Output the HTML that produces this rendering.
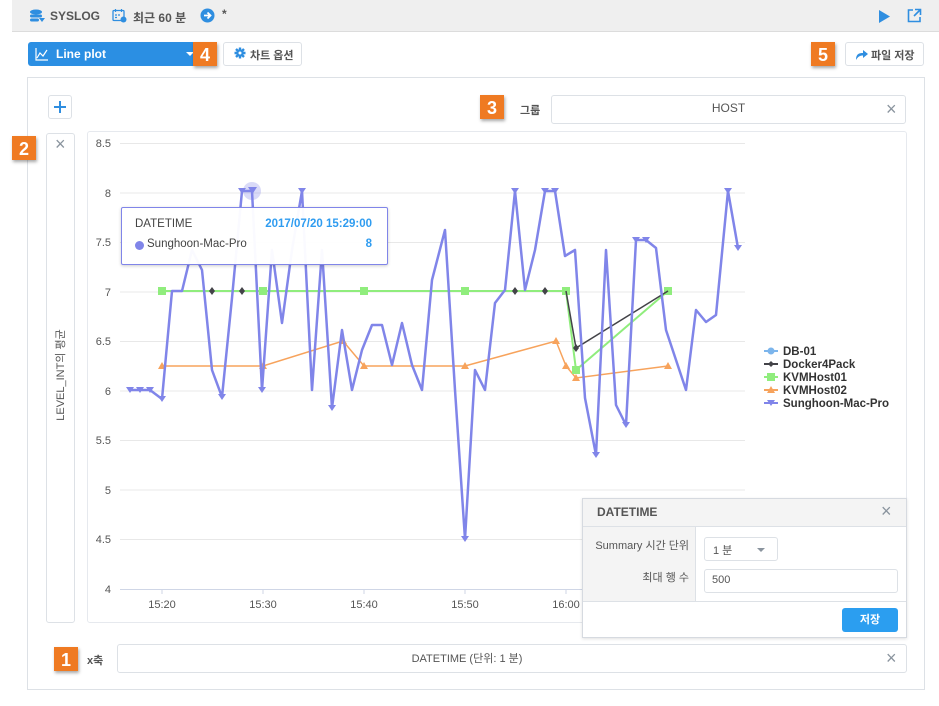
<!DOCTYPE html>
<html><head><meta charset="utf-8"><style>
*{box-sizing:border-box;margin:0;padding:0}
body{width:939px;height:706px;background:#fff;position:relative;overflow:hidden;font-family:"Liberation Sans","Noto Sans CJK KR",sans-serif;color:#444;font-size:12px}
.a{position:absolute}
.badge{position:absolute;width:24px;height:24px;background:#ef7a22;color:#fff;font-size:18px;font-weight:bold;text-align:center;line-height:26px;box-shadow:1px 2px 3px rgba(0,0,0,.35)}
.box{position:absolute;border:1px solid #dde1e6;border-radius:3px;background:#fff}
</style></head><body>
<div class="a" style="left:12px;top:0;width:927px;height:32px;background:#efefef;border-bottom:1px solid #dcdcdc"></div>
<svg class="a" style="left:29px;top:9px" width="16" height="14" viewBox="0 0 16 14"><ellipse cx="7" cy="3" rx="6" ry="2.5" fill="#2f8ee0"/><rect x="1" y="5.5" width="12" height="3" rx="1.5" fill="#2f8ee0"/><rect x="1" y="9.5" width="9" height="3" rx="1.5" fill="#2f8ee0"/><path d="M10 9h6l-3 4z" fill="#2f8ee0"/></svg>
<div class="a" style="left:50px;top:9px;font-size:12px;font-weight:bold;color:#555">SYSLOG</div>
<svg class="a" style="left:112px;top:8px" width="15" height="15" viewBox="0 0 15 15"><rect x="1" y="2.5" width="11" height="10" rx="1" fill="none" stroke="#2f8ee0" stroke-width="1.3"/><path d="M3.5 1v3M9.5 1v3M3 7h2M6 7h2M3 9.5h2" stroke="#2f8ee0" stroke-width="1.2"/><circle cx="11.5" cy="11.5" r="3" fill="#2f8ee0"/></svg>
<div class="a" style="left:133px;top:9px;font-weight:bold;color:#555">최근 60 분</div>
<svg class="a" style="left:200px;top:8px" width="15" height="15"><circle cx="7.5" cy="7.5" r="7" fill="#2f8ee0"/><path d="M4 7.5h6M7.5 4.5l3 3-3 3" stroke="#fff" stroke-width="1.8" fill="none"/></svg>
<div class="a" style="left:222px;top:7px;font-weight:bold;color:#555">*</div>
<svg class="a" style="left:878px;top:10px" width="12" height="13"><path d="M1 0l11 6.5L1 13z" fill="#2f8ee0"/></svg>
<svg class="a" style="left:907px;top:8px" width="15" height="15" fill="none" stroke="#2f8ee0" stroke-width="1.6"><path d="M6 2H1.5v11.5H13V9"/><path d="M8 1.5h5.5V7M13.5 1.5L7 8"/></svg>

<div class="a" style="left:28px;top:42px;width:172px;height:24px;background:#2b8fe3;border-radius:3px"></div>
<svg class="a" style="left:35px;top:47px" width="14" height="14" fill="none" stroke="#fff" stroke-width="1.2"><path d="M1 1v12h12M2 11l3-5 3 3 4-6"/></svg>
<div class="a" style="left:56px;top:47px;color:#fff;font-weight:bold;font-size:12px">Line plot</div>
<div class="a" style="left:186px;top:52px;border:4px solid transparent;border-top-color:#fff;border-bottom:0"></div>
<div class="badge" style="left:193px;top:42px">4</div>
<div class="box" style="left:223px;top:42px;width:79px;height:24px"></div>
<svg class="a" style="left:234px;top:47px" width="12" height="12" viewBox="0 0 12 12"><g stroke="#2f8ee0" stroke-width="2.4"><path d="M6 0.5v11M0.5 6h11M2 2l8 8M10 2l-8 8"/></g><circle cx="6" cy="6" r="3.8" fill="#2f8ee0"/><circle cx="6" cy="6" r="1.5" fill="#fff"/></svg>
<div class="a" style="left:250px;top:47px;font-weight:bold;font-size:11px;color:#555">차트 옵션</div>
<div class="badge" style="left:811px;top:42px">5</div>
<div class="box" style="left:845px;top:42px;width:79px;height:24px"></div>
<svg class="a" style="left:855px;top:49px" width="13" height="11"><path d="M1 11C1 5 4 4 8 4V1l5 4-5 4V6.5C5 6.5 3 7.5 1 11z" fill="#2f8ee0"/></svg>
<div class="a" style="left:871px;top:47px;font-weight:bold;font-size:11px;color:#555">파일 저장</div>

<div class="a" style="left:27px;top:77px;width:898px;height:613px;border:1px solid #dde1e6"></div>
<div class="box" style="left:48px;top:95px;width:24px;height:24px"></div>
<svg class="a" style="left:54px;top:101px" width="12" height="12" stroke="#2f8ee0" stroke-width="2"><path d="M6 0v12M0 6h12"/></svg>
<div class="badge" style="left:480px;top:95px">3</div>
<div class="a" style="left:520px;top:102px;font-weight:bold;font-size:11px;color:#555">그룹</div>
<div class="box" style="left:551px;top:95px;width:355px;height:29px"></div>
<div class="a" style="left:551px;top:101px;width:355px;text-align:center;color:#555">HOST</div>
<div class="a" style="left:886px;top:99px;font-size:18px;color:#8a949e">×</div>
<div class="badge" style="left:12px;top:136px">2</div>
<div class="box" style="left:46px;top:133px;width:29px;height:490px"></div>
<div class="a" style="left:55px;top:134px;font-size:18px;color:#8a949e">×</div>
<div class="a" style="left:60px;top:375px;transform:translate(-50%,-50%) rotate(-90deg);white-space:nowrap;font-size:11px;color:#555">LEVEL_INT의 평균</div>
<div class="box" style="left:87px;top:131px;width:820px;height:492px;border-color:#e6e9ee"></div>

<svg class="a" style="left:0;top:0" width="939" height="706" font-family="Liberation Sans, sans-serif" font-size="11" fill="#555">
<g stroke="#e8e8e8" stroke-width="1">
<path d="M120 143.5H745M120 193H745M120 242.5H745M120 292H745M120 341.5H745M120 391H745M120 440.5H745M120 490H745M120 539.5H745"/>
</g>
<path d="M120 589.5H745" stroke="#cfd6e6"/>
<path d="M162 589v5M263 589v5M364 589v5M465 589v5M566 589v5" stroke="#cfd6e6"/>
<g text-anchor="end"><text x="111" y="147">8.5</text><text x="111" y="197">8</text><text x="111" y="246">7.5</text><text x="111" y="296">7</text><text x="111" y="345">6.5</text><text x="111" y="395">6</text><text x="111" y="444">5.5</text><text x="111" y="494">5</text><text x="111" y="543">4.5</text><text x="111" y="593">4</text></g>
<g text-anchor="middle"><text x="162" y="608">15:20</text><text x="263" y="608">15:30</text><text x="364" y="608">15:40</text><text x="465" y="608">15:50</text><text x="566" y="608">16:00</text></g>
<polyline fill="none" stroke="#f7a35c" stroke-width="1.5" points="162,366 263,366 343,341 364,366 465,366 556,341 566,366 576,378 668,366"/>
<g fill="#f7a35c"><path d="M158,369l4,-7l4,7zM259,369l4,-7l4,7zM339,344l4,-7l4,7zM360,369l4,-7l4,7zM461,369l4,-7l4,7zM552,344l4,-7l4,7zM562,369l4,-7l4,7zM572,381l4,-7l4,7zM664,369l4,-7l4,7z"/></g>
<polyline fill="none" stroke="#90ed7d" stroke-width="2" points="162,291 566,291 576,370 668,291"/>
<g fill="#90ed7d"><rect x="158" y="287" width="8" height="8"/><rect x="259" y="287" width="8" height="8"/><rect x="360" y="287" width="8" height="8"/><rect x="461" y="287" width="8" height="8"/><rect x="562" y="287" width="8" height="8"/><rect x="572" y="366" width="8" height="8"/><rect x="664" y="287" width="8" height="8"/></g>
<polyline fill="none" stroke="#434348" stroke-width="1.5" points="566,291 576,348 668,291"/>
<g fill="#434348"><path d="M212,287l3,4l-3,4l-3,-4zM242,287l3,4l-3,4l-3,-4zM515,287l3,4l-3,4l-3,-4zM545,287l3,4l-3,4l-3,-4zM576,344l3,4l-3,4l-3,-4z"/></g>
<circle cx="252" cy="191" r="9" fill="#8085e9" opacity=".3"/>
<polyline fill="none" stroke="#8085e9" stroke-width="2.5" stroke-linejoin="round" points="130,390 140,390 150,390 162,399 172,291 182,291 192,250 202,270 212,370 222,397 232,298 242,191 252,191 262,390 272,250 282,323 292,250 302,191 312,390 322,250 332,408 342,330 352,390 362,350 372,325 382,325 392,365 402,323 412,365 422,390 432,280 445,230 455,390 465,539 475,370 485,390 495,303 505,290 515,191 525,290 535,250 545,191 555,191 565,256 575,250 585,398 596,455 606,250 616,405 626,425 636,240 646,240 656,248 666,330 676,360 686,390 696,310 706,322 716,315 728,191 738,248"/>
<g fill="#8085e9"><path d="M126,387h8l-4,6zM136,387h8l-4,6zM146,387h8l-4,6zM158,396h8l-4,6zM238,188h8l-4,6zM248,187h9l-4.5,7zM298,188h8l-4,6zM511,188h8l-4,6zM541,188h8l-4,6zM551,188h8l-4,6zM724,188h8l-4,6zM734,245h8l-4,6zM461,536h8l-4,6zM592,452h8l-4,6zM622,422h8l-4,6zM632,237h8l-4,6zM642,237h8l-4,6zM328,405h8l-4,6zM218,394h8l-4,6zM258,387h8l-4,6z"/></g>
<g font-size="11.5" font-weight="bold" fill="#333">
<path d="M764 351h14" stroke="#7cb5ec" stroke-width="2"/><circle cx="771" cy="351" r="3.5" fill="#7cb5ec"/><text x="783" y="355">DB-01</text>
<path d="M764 364h14" stroke="#434348" stroke-width="2"/><path d="M771 361l3 3-3 3-3-3z" fill="#434348"/><text x="783" y="368">Docker4Pack</text>
<path d="M764 377h14" stroke="#90ed7d" stroke-width="2"/><rect x="767" y="373" width="8" height="8" fill="#90ed7d"/><text x="783" y="381">KVMHost01</text>
<path d="M764 390h14" stroke="#f7a35c" stroke-width="2"/><path d="M767 393l4-7 4 7z" fill="#f7a35c"/><text x="783" y="394">KVMHost02</text>
<path d="M764 403h14" stroke="#8085e9" stroke-width="2"/><path d="M767 400h8l-4 6z" fill="#8085e9"/><text x="783" y="407">Sunghoon-Mac-Pro</text>
</g>
</svg>

<div class="a" style="left:121px;top:207px;width:267px;height:58px;background:rgba(255,255,255,.96);border:1px solid #8085e9;border-radius:2px;box-shadow:0 1px 3px rgba(0,0,0,.2)"></div>
<div class="a" style="left:135px;top:218px;font-size:11.5px;color:#444">DATETIME</div>
<div class="a" style="left:264px;top:218px;width:108px;text-align:right;font-size:11.5px;font-weight:bold;color:#2f9cf0">2017/07/20 15:29:00</div>
<div class="a" style="left:135px;top:241px;width:9px;height:9px;border-radius:50%;background:#8085e9"></div>
<div class="a" style="left:147px;top:238px;font-size:11.5px;color:#444">Sunghoon-Mac-Pro</div>
<div class="a" style="left:360px;top:238px;width:12px;text-align:right;font-size:11.5px;font-weight:bold;color:#2f9cf0">8</div>

<div class="a" style="left:582px;top:498px;width:325px;height:140px;background:#fff;border:1px solid #d6dae0;box-shadow:0 1px 3px rgba(0,0,0,.12)"></div>
<div class="a" style="left:583px;top:499px;width:323px;height:28px;background:#f4f4f4;border-bottom:1px solid #dde1e6"></div>
<div class="a" style="left:597px;top:505px;font-weight:bold;font-size:12px;color:#555">DATETIME</div>
<div class="a" style="left:881px;top:501px;font-size:18px;color:#8a949e">×</div>
<div class="a" style="left:583px;top:527px;width:113px;height:75px;background:#f4f4f4;border-right:1px solid #dde1e6;border-bottom:1px solid #dde1e6"></div>
<div class="a" style="left:583px;top:527px;width:323px;height:75px;border-bottom:1px solid #dde1e6"></div>
<div class="a" style="left:583px;top:537px;width:106px;text-align:right;font-size:11px;color:#555">Summary 시간 단위</div>
<div class="a" style="left:583px;top:569px;width:106px;text-align:right;font-size:11px;color:#555">최대 행 수</div>
<div class="box" style="left:704px;top:537px;width:74px;height:24px"></div>
<div class="a" style="left:713px;top:542px;font-size:11px;color:#555">1 분</div>
<div class="a" style="left:757px;top:548px;border:4px solid transparent;border-top-color:#8a949e;border-bottom:0"></div>
<div class="box" style="left:704px;top:569px;width:194px;height:24px"></div>
<div class="a" style="left:712px;top:574px;font-size:11px;color:#555">500</div>
<div class="a" style="left:842px;top:608px;width:56px;height:24px;background:#2b9ef0;border-radius:3px;color:#fff;font-weight:bold;font-size:11px;text-align:center;line-height:24px">저장</div>

<div class="badge" style="left:54px;top:647px">1</div>
<div class="a" style="left:87px;top:652px;font-weight:bold;font-size:11px;color:#555">x축</div>
<div class="box" style="left:117px;top:644px;width:790px;height:29px"></div>
<div class="a" style="left:117px;top:650px;width:700px;text-align:center;font-size:11px;color:#555">DATETIME (단위: 1 분)</div>
<div class="a" style="left:886px;top:648px;font-size:18px;color:#8a949e">×</div>
</body></html>
